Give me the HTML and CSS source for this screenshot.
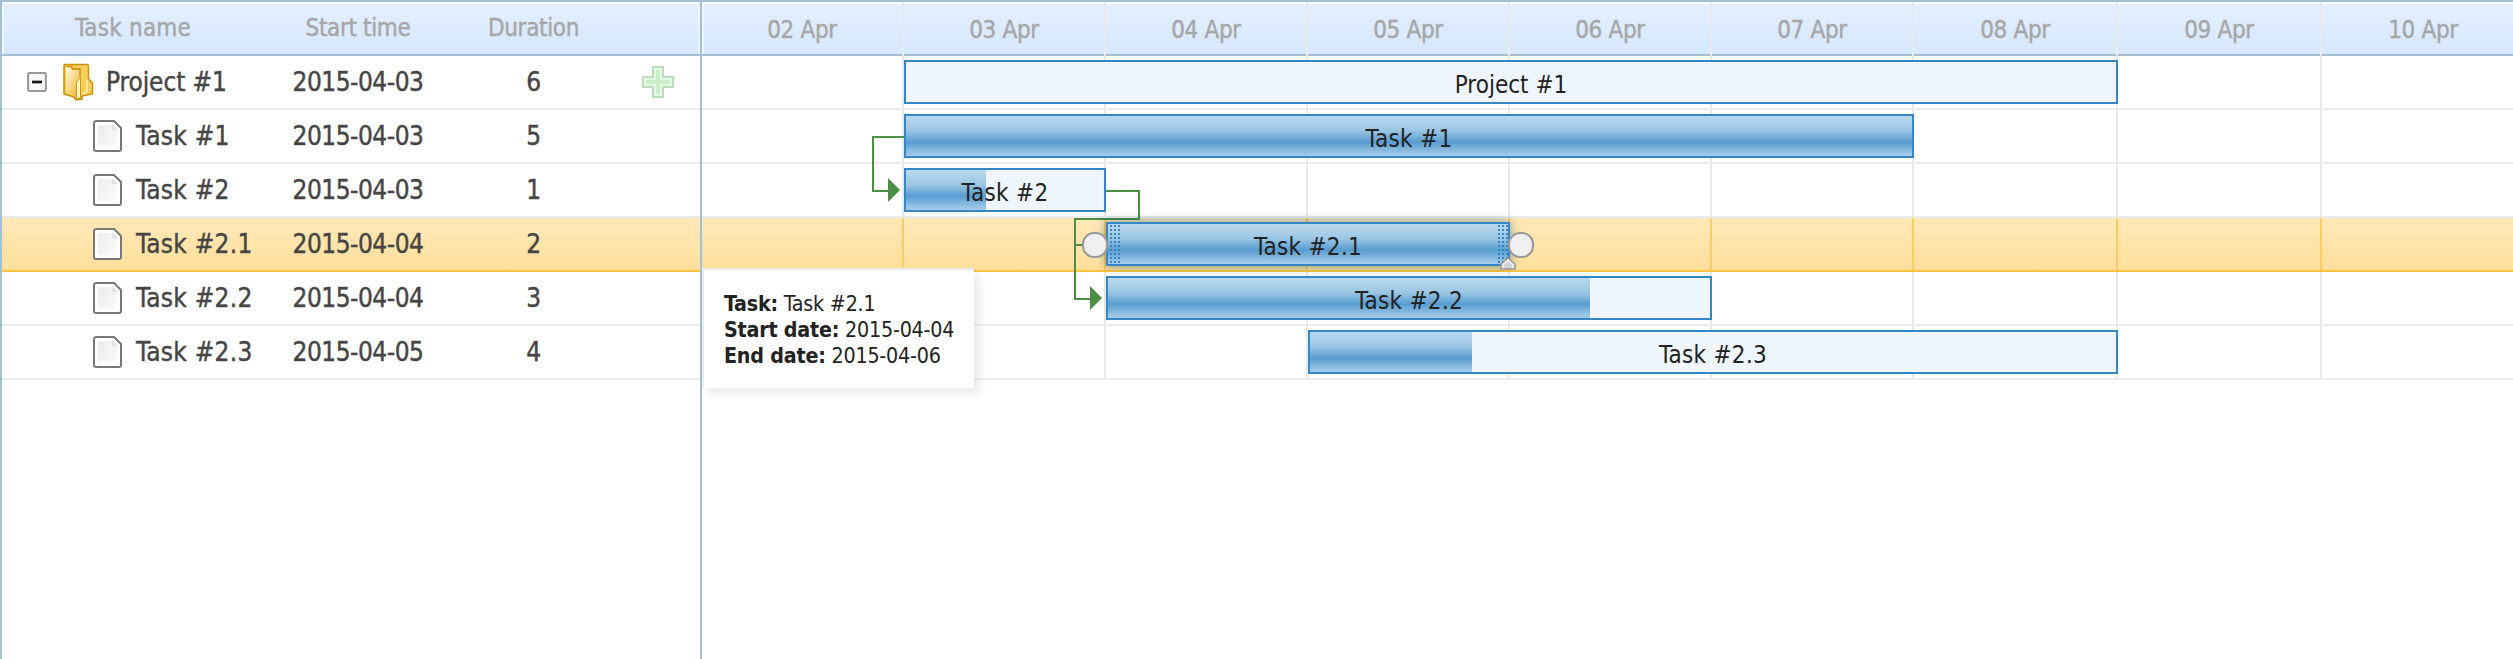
FILE: index.html
```html
<!DOCTYPE html>
<html lang="en">
<head>
<meta charset="utf-8">
<title>Gantt chart</title>
<link rel="stylesheet" href="styles.css">
</head>
<body>
<svg width="0" height="0" class="defs">
  <defs>
    <linearGradient id="gold" x1="0" y1="0" x2="1" y2="1"><stop offset="0" stop-color="#fffbe6"/><stop offset="1" stop-color="#eeb01c"/></linearGradient>
    <linearGradient id="paper" x1="0" y1="0" x2="1" y2="1"><stop offset="0" stop-color="#ececec"/><stop offset="1" stop-color="#fbfbfb"/></linearGradient>
    <symbol id="file" viewBox="0 0 30 34">
      <path d="M4 2H21L28 9V30Q28 32 26 32H3Q1 32 1 30V4Q1 2 4 2Z" fill="#fff" stroke="#777" stroke-width="2"/>
      <path d="M5 6H19V11H24V28H5Z" fill="url(#paper)"/>
      <path d="M19 5V11H25Z" fill="#e2e2e2"/>
    </symbol>
  </defs>
</svg>
<div class="gantt">
  <section class="grid">
    <header class="grid-head"><div class="c-name">Task name</div><div class="c-start">Start time</div><div class="c-dur">Duration</div><div class="c-add"></div></header>
    <div class="row project">
      <div class="c-name">
        <svg class="toggle" viewBox="0 0 18 18"><rect x="1" y="1" width="16" height="16" rx="1" fill="#f7f7f7" stroke="#999" stroke-width="1.8"/><path d="M4.5 9H13.5" stroke="#111" stroke-width="2.4"/></svg>
        <svg class="folder" viewBox="0 0 32 38">
          <path d="M2 3Q2 1.500 4 1.500H25Q26.500 1.500 26.500 3V16L30.500 20V31L20 33V36L14 37L12 34L2 31Z" fill="#f6ce5c" stroke="#cb900c" stroke-width="1.500"/>
          <path d="M4 4H8L10 7H17L18.500 9V15L15 18V34L4 30Z" fill="url(#gold)"/>
          <path d="M5 3.500H9L11 6H18V14" fill="none" stroke="#c98d0b" stroke-width="1.300"/>
          <path d="M14.500 19L18.500 15V35L14.500 36Z" fill="#fff6d2" stroke="#cf960f"/>
          <path d="M25 17V28L21 31" fill="none" stroke="#fff0b5" stroke-width="1.500"/>
        </svg>
        <span>Project #1</span>
      </div>
      <div class="c-start">2015-04-03</div><div class="c-dur">6</div>
      <div class="c-add"><svg class="plus" viewBox="0 0 32 32"><path d="M11 1H21V11H31V21H21V31H11V21H1V11H11Z" fill="#c9efc9" stroke="#b9deb9" stroke-width="2"/><path d="M13 3H19V13H29V19H19V29H13V19H3V13H13Z" fill="none" stroke="#e6f8e6" stroke-width="2"/></svg></div>
    </div>
    <div class="row"><div class="c-name"><svg class="file"><use href="#file"/></svg><span>Task #1</span></div><div class="c-start">2015-04-03</div><div class="c-dur">5</div><div class="c-add"></div></div>
    <div class="row"><div class="c-name"><svg class="file"><use href="#file"/></svg><span>Task #2</span></div><div class="c-start">2015-04-03</div><div class="c-dur">1</div><div class="c-add"></div></div>
    <div class="row selected"><div class="c-name"><svg class="file"><use href="#file"/></svg><span>Task #2.1</span></div><div class="c-start">2015-04-04</div><div class="c-dur">2</div><div class="c-add"></div></div>
    <div class="row"><div class="c-name"><svg class="file"><use href="#file"/></svg><span>Task #2.2</span></div><div class="c-start">2015-04-04</div><div class="c-dur">3</div><div class="c-add"></div></div>
    <div class="row"><div class="c-name"><svg class="file"><use href="#file"/></svg><span>Task #2.3</span></div><div class="c-start">2015-04-05</div><div class="c-dur">4</div><div class="c-add"></div></div>
  </section>
  <section class="timeline">
    <header class="scale cols"><div>02 Apr</div><div>03 Apr</div><div>04 Apr</div><div>05 Apr</div><div>06 Apr</div><div>07 Apr</div><div>08 Apr</div><div>09 Apr</div><div>10 Apr</div></header>
    <div class="chart">
      <div class="line cols"><i></i><i></i><i></i><i></i><i></i><i></i><i></i><i></i><i></i></div>
      <div class="line cols"><i></i><i></i><i></i><i></i><i></i><i></i><i></i><i></i><i></i></div>
      <div class="line cols"><i></i><i></i><i></i><i></i><i></i><i></i><i></i><i></i><i></i></div>
      <div class="line cols selected"><i></i><i></i><i></i><i></i><i></i><i></i><i></i><i></i><i></i></div>
      <div class="line cols"><i></i><i></i><i></i><i></i><i></i><i></i><i></i><i></i><i></i></div>
      <div class="line cols"><i></i><i></i><i></i><i></i><i></i><i></i><i></i><i></i><i></i></div>
      <svg class="links" viewBox="0 0 1811 324">
        <path d="M202 81H171V135H187M404 135H437V163H373V243H389M373 189H382" fill="none" stroke="#4a8f43" stroke-width="2"/>
        <path d="M186 122L198 134L186 146ZM388 230L400 242L388 254Z" fill="#4a8f43"/>
      </svg>
      <div class="bars cols">
        <div class="bar b1"><span>Project #1</span></div>
        <div class="bar b2"><div class="done" style="width:100%"></div><span>Task #1</span></div>
        <div class="bar b3"><div class="done" style="width:80px"></div><span>Task #2</span></div>
        <div class="bar b4"><div class="done" style="width:100%"></div><span>Task #2.1</span>
          <div class="grip left"></div><div class="grip right"></div><div class="knob start"></div><div class="knob end"></div>
          <svg class="drag" viewBox="0 0 16 13"><path d="M1 12V7L8 1L15 7V12Z" fill="#d2d2d2" stroke="#999" stroke-width="1.6"/><path d="M3 11V8L8 3L13 8V11" fill="none" stroke="#f4f4f4" stroke-width="1.5"/></svg>
        </div>
        <div class="bar b5"><div class="done" style="width:482px"></div><span>Task #2.2</span></div>
        <div class="bar b6"><div class="done" style="width:162px"></div><span>Task #2.3</span></div>
      </div>
      <div class="tooltip"><div><b>Task:</b> Task #2.1</div><div><b>Start date:</b> 2015-04-04</div><div><b>End date:</b> 2015-04-06</div></div>
    </div>
  </section>
</div>
</body>
</html>
```
FILE: styles.css
```css
* { box-sizing: border-box; }
body { margin: 0; background: #fff; overflow: hidden; font-family: "DejaVu Sans Condensed", "DejaVu Sans", sans-serif; font-stretch: condensed; }
.defs { position: absolute; }
.gantt { display: flex; width: 2513px; height: 659px; border-top: 2px solid #a4bed4; border-left: 2px solid #a4bed4; }
.grid { width: 700px; flex: none; border-right: 2px solid #a4bed4; }
.timeline { flex: 1; min-width: 0; overflow: hidden; }
.grid-head, .scale { height: 54px; border-bottom: 2px solid #a4bed4; background: linear-gradient(#fff 0 2px, #e3efff 2px, #d5e7ff 100%); color: #a6a6a6; font-size: 24px; letter-spacing: -0.35px; box-shadow: inset 2px 0 #edf5ff; -webkit-text-stroke: 0.4px #a6a6a6; }
.grid-head { display: flex; line-height: 52px; text-align: center; box-shadow: inset 2px 0 #edf5ff, inset -2px 0 #edf5ff; }
.grid-head .c-name { letter-spacing: 0.2px; }
.c-name { width: 262px; flex: none; }
.c-start { width: 188px; flex: none; text-align: center; }
.c-dur { width: 163px; flex: none; text-align: center; }
.c-add { flex: 1; display: flex; align-items: center; justify-content: center; }
.row { display: flex; height: 54px; border-bottom: 2px solid #ebebeb; color: #454545; font-size: 26px; letter-spacing: -0.5px; line-height: 53px; -webkit-text-stroke: 0.4px #454545; }
.row .c-name { display: flex; align-items: center; padding-left: 91px; white-space: nowrap; letter-spacing: 0.25px; }
.row.project .c-name { padding-left: 25px; letter-spacing: -0.1px; }
.row.selected, .line.selected { background: linear-gradient(#ffe8b8, #ffdf9b); border-bottom-color: #ffc341; }
.toggle { width: 20px; height: 20px; margin-right: 15px; }
.folder { width: 32px; height: 38px; margin-right: 12px; }
.file { width: 30px; height: 34px; margin-right: 13px; }
.plus { width: 32px; height: 32px; }
.cols { display: grid; grid-template-columns: repeat(6, 202px) 204px 204px 204px; }
.scale { line-height: 57px; text-align: center; }
.scale div, .line i { border-right: 2px solid #e9e9e9; }
.chart { position: relative; }
.line { height: 54px; border-bottom: 2px solid #ebebeb; }
.line.selected i { border-color: #ffcb63; }
.links { position: absolute; left: 0; top: 0; width: 1811px; height: 324px; }
.bars { position: absolute; left: 0; top: 0; grid-template-rows: repeat(6, 54px); }
.bar { position: relative; height: 44px; margin-top: 4px; border: 2px solid #3588c5; background: #eef5fc; display: grid; font-size: 24px; letter-spacing: 0.3px; color: #222; }
.bar > .done, .bar > span { grid-area: 1 / 1; }
.bar > span { position: relative; text-align: center; line-height: 46px; height: 40px; }
.done { height: 40px; background: linear-gradient(#bcd9ee 0, #9cc6e4 36%, #589dd1 65%, #a9cde9 100%); }
.b1 { grid-area: 1 / 2 / 2 / 8; letter-spacing: 0; }
.b2 { grid-area: 2 / 2 / 3 / 7; }
.b3 { grid-area: 3 / 2 / 4 / 3; }
.b4 { grid-area: 4 / 3 / 5 / 5; box-shadow: 0 0 10px rgba(7, 76, 117, .55); }
.b5 { grid-area: 5 / 3 / 6 / 6; }
.b6 { grid-area: 6 / 4 / 7 / 8; }
.grip { position: absolute; top: 1px; width: 10px; height: 39px; background: repeating-linear-gradient(90deg, #3588c5 0 2px, transparent 2px 4px); -webkit-mask: repeating-linear-gradient(#000 0 2px, transparent 2px 4px); mask: repeating-linear-gradient(#000 0 2px, transparent 2px 4px); }
.grip.left { left: 2px; }
.grip.right { right: 0; }
.knob { position: absolute; top: 8px; width: 26px; height: 26px; border: 2px solid #999; border-radius: 12px; background: #efefef; }
.knob.start { left: -26px; }
.knob.end { right: -26px; }
.drag { position: absolute; left: 392px; top: 33px; width: 16px; height: 13px; }
.tooltip { position: absolute; left: 0; top: 212px; width: 272px; height: 120px; padding: 21px 20px; border-top: 2px solid #ececec; border-left: 2px solid #ececec; background: #fff; box-shadow: 6px 6px 8px rgba(0, 0, 0, .08); color: #222; font-size: 21.3px; line-height: 26px; letter-spacing: -0.22px; white-space: nowrap; }
```
